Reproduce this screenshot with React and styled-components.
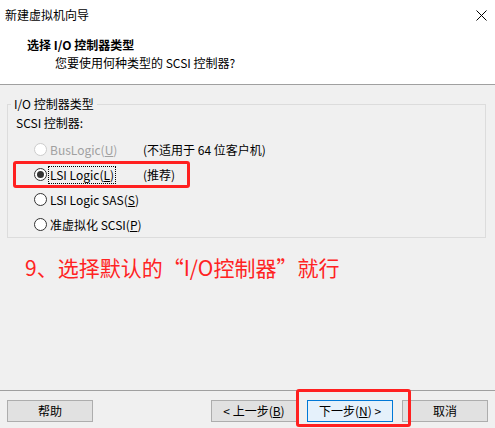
import React from 'react'
import styled, { createGlobalStyle } from 'styled-components'

const GlobalStyle = createGlobalStyle`
  html, body {
    margin: 0;
    padding: 0;
    background: #f0f0f0;
  }
  body {
    font-family: "Noto Sans CJK SC", "Microsoft YaHei", sans-serif;
    font-size: 12px;
    color: #000;
  }
`

const options = [
  { id: 'bus', label: 'BusLogic(', key: 'U', note: '(不适用于 64 位客户机)', disabled: true },
  { id: 'lsi', label: 'LSI Logic(', key: 'L', note: '(推荐)', checked: true, highlight: true },
  { id: 'sas', label: 'LSI Logic SAS(', key: 'S' },
  { id: 'pv', label: '准虚拟化 SCSI(', key: 'P' }
]

const App = () => {
  return (
    <Window>
      <GlobalStyle />
      <Header>
        <TitleBar>
          <span>新建虚拟机向导</span>
          <CloseIcon width="11" height="11" viewBox="0 0 11 11">
            <path d="M0.5 0.5 L10.5 10.5 M10.5 0.5 L0.5 10.5" stroke="#000" strokeWidth="1" />
          </CloseIcon>
        </TitleBar>
        <Heading>选择 I/O 控制器类型</Heading>
        <SubHeading>您要使用何种类型的 SCSI 控制器?</SubHeading>
      </Header>

      <Body>
        <GroupBox>
          <Legend>I/O 控制器类型</Legend>
          <GroupLabel>SCSI 控制器:</GroupLabel>
          <RadioList>
            {options.map((opt) => (
              <RadioRow key={opt.id} disabled={opt.disabled}>
                <Circle disabled={opt.disabled}>{opt.checked && <Dot />}</Circle>
                <RadioText focused={opt.checked}>
                  {opt.label}
                  <u>{opt.key}</u>)
                </RadioText>
                {opt.note && <Note>{opt.note}</Note>}
                {opt.highlight && <RowMark />}
              </RadioRow>
            ))}
          </RadioList>
        </GroupBox>
        <Tip>9、选择默认的“I/O控制器”就行</Tip>
      </Body>

      <Footer>
        <Button>帮助</Button>
        <Spacer />
        <Button>
          &lt; 上一步(<u>B</u>)
        </Button>
        <NextWrap>
          <Button primary>
            下一步(<u>N</u>) &gt;
          </Button>
          <ButtonMark />
        </NextWrap>
        <Button>取消</Button>
      </Footer>
    </Window>
  )
}

const Window = styled.div`
  width: 495px;
  height: 428px;
  display: flex;
  flex-direction: column;
  overflow: hidden;
`

const Header = styled.div`
  height: 85px;
  background: #fff;
  border-bottom: 1px solid #a0a0a0;
  box-sizing: border-box;
`

const TitleBar = styled.div`
  height: 30px;
  padding: 0 7px 0 5px;
  display: flex;
  align-items: center;
  justify-content: space-between;
  line-height: 14px;
`

const CloseIcon = styled.svg`
  display: block;
  margin-right: 1px;
`

const Heading = styled.div`
  margin: 7px 0 0 27px;
  font-weight: bold;
  line-height: 16px;
  font-family: "Noto Sans CJK SC", "SimSun", sans-serif;
`

const SubHeading = styled.div`
  margin: 2px 0 0 55px;
  line-height: 16px;
`

const Body = styled.div`
  flex: 1;
  padding: 12px 9px 0 7px;
`

const GroupBox = styled.fieldset`
  margin: 0;
  padding: 2px 0 7px 0;
  height: 141px;
  box-sizing: border-box;
  border: 1px solid #dcdcdc;
  border-radius: 0;
`

const Legend = styled.legend`
  margin-left: 3px;
  padding: 0 3px 0 3px;
  line-height: 14px;
`

const GroupLabel = styled.div`
  margin: 2px 0 0 8px;
  line-height: 16px;
`

const RadioList = styled.div`
  display: flex;
  flex-direction: column;
  gap: 8px;
  margin: 10px 0 0 26px;
`

const RadioRow = styled.div`
  position: relative;
  display: flex;
  align-items: center;
  height: 17px;
  color: ${(p) => (p.disabled ? '#a0a0a0' : '#000')};
`

const Circle = styled.span`
  width: 13px;
  height: 13px;
  box-sizing: border-box;
  border-radius: 50%;
  border: 1px solid ${(p) => (p.disabled ? '#cccccc' : '#333')};
  background: #fff;
  display: flex;
  align-items: center;
  justify-content: center;
  flex: none;
`

const Dot = styled.span`
  width: 7px;
  height: 7px;
  border-radius: 50%;
  background: #333;
`

const RadioText = styled.span`
  margin-left: 2px;
  padding: 0 1px;
  line-height: 16px;
  outline: ${(p) => (p.focused ? '1px dotted #000' : 'none')};
  u {
    text-decoration: underline;
  }
`

const Note = styled.span`
  position: absolute;
  left: 109px;
  color: #000;
  line-height: 16px;
`

const RowMark = styled.span`
  position: absolute;
  left: -21px;
  top: -5px;
  width: 177px;
  height: 27px;
  border: 3px solid #ff2020;
  border-radius: 3px;
  box-sizing: border-box;
  pointer-events: none;
`

const Tip = styled.div`
  margin: 15px 0 0 18px;
  color: #ff2323;
  font-size: 21px;
  line-height: 28px;
`

const Footer = styled.div`
  height: 38px;
  border-top: 1px solid #a0a0a0;
  padding: 9px 7px 0 7px;
  display: flex;
  align-items: flex-start;
  box-sizing: border-box;
`

const Spacer = styled.div`
  flex: 1;
`

const Button = styled.button`
  width: 86px;
  height: 22px;
  margin: 0;
  padding: 0;
  box-sizing: border-box;
  font-family: inherit;
  font-size: 12px;
  line-height: 18px;
  color: #000;
  background: ${(p) => (p.primary ? '#e5f1fb' : '#e1e1e1')};
  border: 1px solid ${(p) => (p.primary ? '#0078d7' : '#adadad')};
  border-radius: 0;
  u {
    text-decoration: underline;
  }
`

const NextWrap = styled.div`
  position: relative;
  margin: 0 9px 0 10px;
`

const ButtonMark = styled.span`
  position: absolute;
  left: -11px;
  top: -11px;
  width: 115px;
  height: 38px;
  border: 3px solid #ff2020;
  border-radius: 3px;
  box-sizing: border-box;
  pointer-events: none;
`

export default App
